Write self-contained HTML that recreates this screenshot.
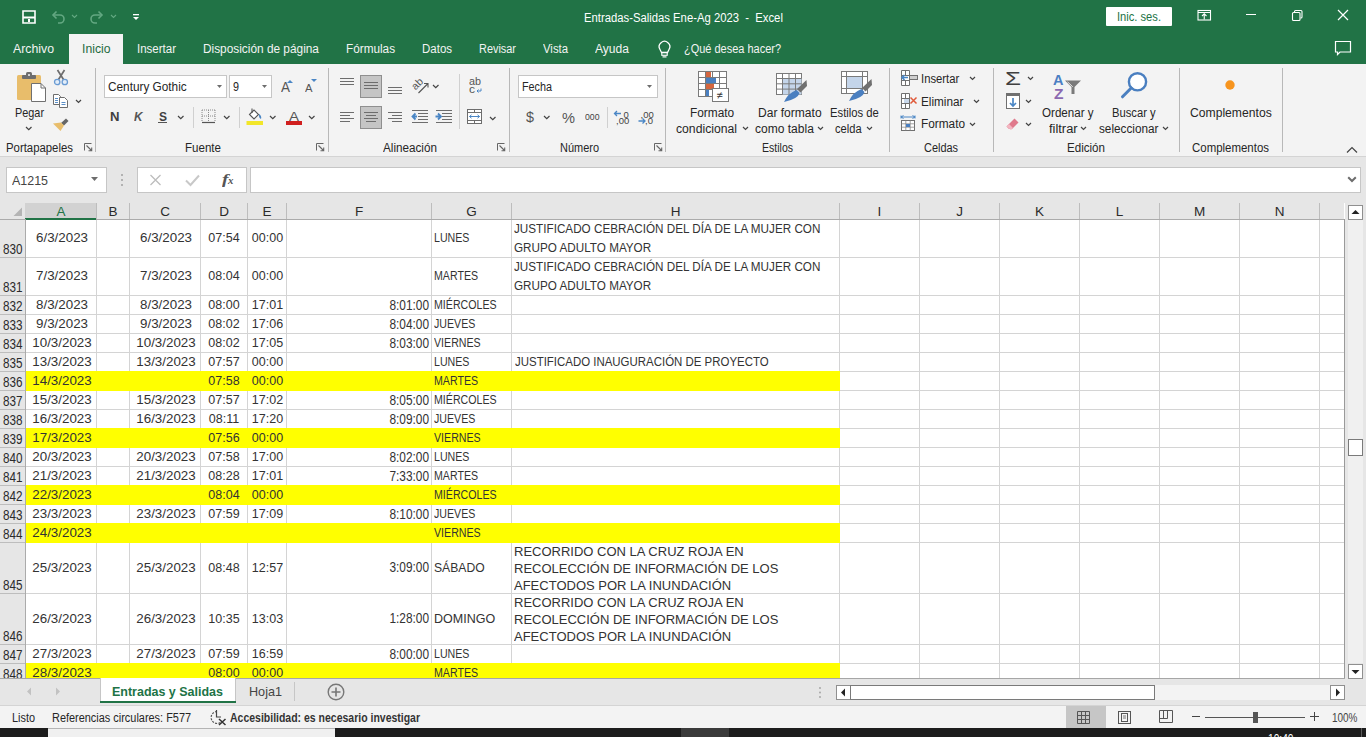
<!DOCTYPE html>
<html><head><meta charset="utf-8"><title>Excel</title>
<style>
html,body{margin:0;padding:0;width:1366px;height:737px;overflow:hidden;background:#fff;}
body{position:relative;font-family:"Liberation Sans", sans-serif;}
.a{position:absolute;}
.t{position:absolute;white-space:pre;font-family:"Liberation Sans", sans-serif;}
svg.a{overflow:visible;}
</style></head><body>
<div class="a" style="left:0px;top:0px;width:1366px;height:64px;background:#217346;"></div><div class="a" style="left:69px;top:34px;width:54px;height:30px;background:#f3f3f3;"></div><div class="t" style="top:11.92px;font-size:12.5px;line-height:12.5px;color:#ffffff;left:584px;transform:scaleX(0.903);transform-origin:left;">Entradas-Salidas Ene-Ag 2023  -  Excel</div><div class="a" style="left:1106px;top:7px;width:66px;height:19px;background:#ffffff;border-radius:1px;"></div><div class="t" style="top:10.92px;font-size:12.5px;line-height:12.5px;color:#217346;left:1117px;transform:scaleX(0.892);transform-origin:left;">Inic. ses.</div><div class="t" style="top:43.42px;font-size:12.5px;line-height:12.5px;color:#f3f3f3;left:13px;transform:scaleX(0.984);transform-origin:left;">Archivo</div><div class="t" style="top:43.42px;font-size:12.5px;line-height:12.5px;color:#f3f3f3;left:137px;transform:scaleX(0.920);transform-origin:left;">Insertar</div><div class="t" style="top:43.42px;font-size:12.5px;line-height:12.5px;color:#f3f3f3;left:203px;transform:scaleX(0.948);transform-origin:left;">Disposición de página</div><div class="t" style="top:43.42px;font-size:12.5px;line-height:12.5px;color:#f3f3f3;left:346px;transform:scaleX(0.941);transform-origin:left;">Fórmulas</div><div class="t" style="top:43.42px;font-size:12.5px;line-height:12.5px;color:#f3f3f3;left:422px;transform:scaleX(0.919);transform-origin:left;">Datos</div><div class="t" style="top:43.42px;font-size:12.5px;line-height:12.5px;color:#f3f3f3;left:479px;transform:scaleX(0.873);transform-origin:left;">Revisar</div><div class="t" style="top:43.42px;font-size:12.5px;line-height:12.5px;color:#f3f3f3;left:543px;transform:scaleX(0.907);transform-origin:left;">Vista</div><div class="t" style="top:43.42px;font-size:12.5px;line-height:12.5px;color:#f3f3f3;left:595px;transform:scaleX(0.965);transform-origin:left;">Ayuda</div><div class="t" style="top:43.42px;font-size:12.5px;line-height:12.5px;color:#f3f3f3;left:684px;transform:scaleX(0.878);transform-origin:left;">¿Qué desea hacer?</div><div class="t" style="top:43.42px;font-size:12.5px;line-height:12.5px;color:#1e6b3f;left:81.5px;transform:scaleX(0.976);transform-origin:left;">Inicio</div><div class="a" style="left:0px;top:64px;width:1366px;height:92px;background:#f3f3f3;"></div><div class="a" style="left:0px;top:156px;width:1366px;height:1px;background:#d4d4d4;"></div><div class="a" style="left:95px;top:68px;width:1px;height:84px;background:#b8b8b8;"></div><div class="a" style="left:328px;top:68px;width:1px;height:84px;background:#b8b8b8;"></div><div class="a" style="left:509px;top:68px;width:1px;height:84px;background:#b8b8b8;"></div><div class="a" style="left:665px;top:68px;width:1px;height:84px;background:#b8b8b8;"></div><div class="a" style="left:889px;top:68px;width:1px;height:84px;background:#b8b8b8;"></div><div class="a" style="left:993px;top:68px;width:1px;height:84px;background:#b8b8b8;"></div><div class="a" style="left:1179px;top:68px;width:1px;height:84px;background:#b8b8b8;"></div><div class="a" style="left:1282px;top:68px;width:1px;height:84px;background:#b8b8b8;"></div><div class="t" style="top:142.42px;font-size:12.5px;line-height:12.5px;color:#262626;left:6px;transform:scaleX(0.909);transform-origin:left;">Portapapeles</div><div class="t" style="top:142.42px;font-size:12.5px;line-height:12.5px;color:#262626;left:185px;transform:scaleX(0.925);transform-origin:left;">Fuente</div><div class="t" style="top:142.42px;font-size:12.5px;line-height:12.5px;color:#262626;left:383px;transform:scaleX(0.936);transform-origin:left;">Alineación</div><div class="t" style="top:142.42px;font-size:12.5px;line-height:12.5px;color:#262626;left:560px;transform:scaleX(0.877);transform-origin:left;">Número</div><div class="t" style="top:142.42px;font-size:12.5px;line-height:12.5px;color:#262626;left:762px;transform:scaleX(0.842);transform-origin:left;">Estilos</div><div class="t" style="top:142.42px;font-size:12.5px;line-height:12.5px;color:#262626;left:924px;transform:scaleX(0.874);transform-origin:left;">Celdas</div><div class="t" style="top:142.42px;font-size:12.5px;line-height:12.5px;color:#262626;left:1067px;transform:scaleX(0.927);transform-origin:left;">Edición</div><div class="t" style="top:142.42px;font-size:12.5px;line-height:12.5px;color:#262626;left:1192px;transform:scaleX(0.916);transform-origin:left;">Complementos</div><div class="t" style="top:105.50px;font-size:13px;line-height:13px;color:#262626;left:14.75px;transform:scaleX(0.836);transform-origin:left;">Pegar</div><div class="a" style="left:104px;top:75px;width:123px;height:23px;background:#ffffff;border:1px solid #c6c6c6;box-sizing:border-box;"></div><div class="t" style="top:81.42px;font-size:12.5px;line-height:12.5px;color:#262626;left:107.7px;transform:scaleX(0.944);transform-origin:left;">Century Gothic</div><div class="a" style="left:229px;top:75px;width:43px;height:23px;background:#ffffff;border:1px solid #c6c6c6;box-sizing:border-box;"></div><div class="t" style="top:81.42px;font-size:12.5px;line-height:12.5px;color:#262626;left:232.5px;transform:scaleX(0.863);transform-origin:left;">9</div><div class="a" style="left:518px;top:75px;width:140px;height:23px;background:#ffffff;border:1px solid #c6c6c6;box-sizing:border-box;"></div><div class="t" style="top:81.42px;font-size:12.5px;line-height:12.5px;color:#262626;left:521.5px;transform:scaleX(0.863);transform-origin:left;">Fecha</div><div class="t" style="top:107.42px;font-size:12.5px;line-height:12.5px;color:#262626;left:690.3px;transform:scaleX(0.950);transform-origin:left;">Formato</div><div class="t" style="top:123.42px;font-size:12.5px;line-height:12.5px;color:#262626;left:676.4px;transform:scaleX(0.975);transform-origin:left;">condicional</div><div class="t" style="top:107.42px;font-size:12.5px;line-height:12.5px;color:#262626;left:758px;transform:scaleX(0.964);transform-origin:left;">Dar formato</div><div class="t" style="top:123.42px;font-size:12.5px;line-height:12.5px;color:#262626;left:754.6px;transform:scaleX(0.963);transform-origin:left;">como tabla</div><div class="t" style="top:107.42px;font-size:12.5px;line-height:12.5px;color:#262626;left:830.3px;transform:scaleX(0.900);transform-origin:left;">Estilos de</div><div class="t" style="top:123.42px;font-size:12.5px;line-height:12.5px;color:#262626;left:835.4px;transform:scaleX(0.890);transform-origin:left;">celda</div><div class="t" style="top:73.42px;font-size:12.5px;line-height:12.5px;color:#262626;left:920.5px;transform:scaleX(0.901);transform-origin:left;">Insertar</div><div class="t" style="top:96.42px;font-size:12.5px;line-height:12.5px;color:#262626;left:920.5px;transform:scaleX(0.939);transform-origin:left;">Eliminar</div><div class="t" style="top:118.42px;font-size:12.5px;line-height:12.5px;color:#262626;left:920.5px;transform:scaleX(0.945);transform-origin:left;">Formato</div><div class="t" style="top:107.42px;font-size:12.5px;line-height:12.5px;color:#262626;left:1042.3px;transform:scaleX(0.928);transform-origin:left;">Ordenar y</div><div class="t" style="top:123.42px;font-size:12.5px;line-height:12.5px;color:#262626;left:1048.8px;transform:scaleX(1.029);transform-origin:left;">filtrar</div><div class="t" style="top:107.42px;font-size:12.5px;line-height:12.5px;color:#262626;left:1112px;transform:scaleX(0.898);transform-origin:left;">Buscar y</div><div class="t" style="top:123.42px;font-size:12.5px;line-height:12.5px;color:#262626;left:1099.2px;transform:scaleX(0.939);transform-origin:left;">seleccionar</div><div class="t" style="top:107.42px;font-size:12.5px;line-height:12.5px;color:#262626;left:1190px;transform:scaleX(0.972);transform-origin:left;">Complementos</div><div class="a" style="left:0px;top:157px;width:1366px;height:46px;background:#e6e6e6;"></div><div class="a" style="left:6px;top:167px;width:101px;height:26px;background:#ffffff;border:1px solid #c6c6c6;box-sizing:border-box;"></div><div class="t" style="top:174.00px;font-size:13px;line-height:13px;color:#444444;left:12.4px;transform:scaleX(0.958);transform-origin:left;">A1215</div><div class="a" style="left:137px;top:167px;width:110px;height:26px;background:#ffffff;border:1px solid #c6c6c6;box-sizing:border-box;"></div><div class="a" style="left:250px;top:167px;width:1111px;height:26px;background:#ffffff;border:1px solid #c6c6c6;box-sizing:border-box;"></div><svg class="a" style="left:22px;top:10px;" width="14" height="14" viewBox="0 0 14 14"><path d="M1 1 H13 V13 H1 Z" fill="none" stroke="#fff" stroke-width="1.6"/><rect x="1" y="6.5" width="12" height="2" fill="#fff"/><rect x="6" y="9" width="2" height="3" fill="#fff"/></svg><svg class="a" style="left:50px;top:9px;" width="16" height="15" viewBox="0 0 16 15"><path d="M3 6 H10 A4 4 0 0 1 10 14 H8" fill="none" stroke="#63a882" stroke-width="1.6"/><path d="M6.5 2.5 L3 6 L6.5 9.5" fill="none" stroke="#63a882" stroke-width="1.6"/></svg><svg class="a" style="left:71px;top:14px;" width="7" height="5" viewBox="0 0 7 5"><path d="M1 1 L3.5 3.5 L6 1" fill="none" stroke="#63a882" stroke-width="1.1"/></svg><svg class="a" style="left:89px;top:9px;" width="16" height="15" viewBox="0 0 16 15"><path d="M13 6 H6 A4 4 0 0 0 6 14 H8" fill="none" stroke="#63a882" stroke-width="1.6"/><path d="M9.5 2.5 L13 6 L9.5 9.5" fill="none" stroke="#63a882" stroke-width="1.6"/></svg><svg class="a" style="left:110px;top:14px;" width="7" height="5" viewBox="0 0 7 5"><path d="M1 1 L3.5 3.5 L6 1" fill="none" stroke="#63a882" stroke-width="1.1"/></svg><svg class="a" style="left:132px;top:13px;" width="8" height="8" viewBox="0 0 8 8"><rect x="1" y="1" width="6" height="1.3" fill="#fff"/><path d="M1 4 H7 L4 7 Z" fill="#fff"/></svg><svg class="a" style="left:1197px;top:9px;" width="15" height="12" viewBox="0 0 15 12"><rect x="1" y="1.5" width="12.5" height="9.5" fill="none" stroke="#fff" stroke-width="1.1"/><path d="M1 3.5 H13.5" stroke="#fff" stroke-width="1"/><path d="M7.25 10.5 V5 M5 7 L7.25 4.8 L9.5 7" fill="none" stroke="#fff" stroke-width="1.1"/></svg><div class="a" style="left:1246px;top:14px;width:10px;height:1px;background:#ffffff;"></div><svg class="a" style="left:1291px;top:9px;" width="13" height="13" viewBox="0 0 13 13"><rect x="1.5" y="3.5" width="7.5" height="8" rx="1" fill="none" stroke="#fff" stroke-width="1.1"/><path d="M3.5 3 V2.5 A1 1 0 0 1 4.5 1.5 H10 A1 1 0 0 1 11 2.5 V8 A1 1 0 0 1 10 9 H9.5" fill="none" stroke="#fff" stroke-width="1.1"/></svg><svg class="a" style="left:1337px;top:9px;" width="12" height="12" viewBox="0 0 12 12"><path d="M1 1 L11 11 M11 1 L1 11" stroke="#fff" stroke-width="1.2"/></svg><svg class="a" style="left:1334px;top:40px;" width="18" height="17" viewBox="0 0 18 17"><path d="M1.5 1.5 H16.5 V12 H6 L3.5 14.5 V12 H1.5 Z" fill="none" stroke="#fff" stroke-width="1.2"/></svg><svg class="a" style="left:657px;top:40px;" width="15" height="19" viewBox="0 0 15 19"><path d="M4.5 12.5 L3 9.5 A5.3 5.3 0 1 1 12 9.5 L10.5 12.5 Z" fill="none" stroke="#fff" stroke-width="1.3"/><rect x="4.8" y="12.5" width="5.4" height="2.8" fill="none" stroke="#fff" stroke-width="1.1"/><rect x="5.5" y="16.3" width="4" height="1.2" fill="#fff"/></svg><svg class="a" style="left:17px;top:72px;" width="30" height="31" viewBox="0 0 30 31"><rect x="0" y="3" width="24" height="25" rx="1.5" fill="#e8bd6b"/><rect x="5" y="3" width="14" height="4" rx="1" fill="#6d6d6d"/><rect x="9" y="0" width="6" height="5" rx="1.5" fill="#6d6d6d"/><circle cx="12" cy="3" r="1" fill="#f3f3f3"/><path d="M14.5 11.5 H24 L28.5 16 V29.5 H14.5 Z" fill="#ffffff" stroke="#707070" stroke-width="1"/><path d="M24 11.5 V16 H28.5" fill="none" stroke="#707070" stroke-width="1"/></svg><svg class="a" style="left:24.75px;top:126px;" width="7.5" height="4.75" viewBox="0 0 7.5 4.75"><path d="M1 1 L3.75 3.75 L6.5 1" fill="none" stroke="#444444" stroke-width="1.2"/></svg><svg class="a" style="left:53px;top:69px;" width="16" height="17" viewBox="0 0 16 17"><path d="M4.5 1 L10.5 10.5 M11.5 1 L5.5 10.5" stroke="#6d6d6d" stroke-width="1.7"/><circle cx="4.2" cy="13" r="2.7" fill="#e3edf8" stroke="#6a9bd3" stroke-width="1.3"/><circle cx="11.8" cy="13" r="2.7" fill="#e3edf8" stroke="#6a9bd3" stroke-width="1.3"/></svg><svg class="a" style="left:52px;top:93px;" width="18" height="16" viewBox="0 0 18 16"><path d="M1.5 1.5 H6.5 L8.5 3.5 V11.5 H1.5 Z" fill="#fff" stroke="#6d6d6d" stroke-width="1"/><path d="M3 5.5 H6 M3 7.5 H6 M3 9.5 H6" stroke="#5b8fc7" stroke-width="1"/><path d="M7.5 4.5 H12.5 L15.5 7.5 V14.5 H7.5 Z" fill="#fff" stroke="#6d6d6d" stroke-width="1"/><path d="M9.5 9.5 H13.5 M9.5 11.5 H13.5" stroke="#5b8fc7" stroke-width="1"/></svg><svg class="a" style="left:75.0px;top:99px;" width="7" height="4.5" viewBox="0 0 7 4.5"><path d="M1 1 L3.5 3.5 L6 1" fill="none" stroke="#444444" stroke-width="1.2"/></svg><svg class="a" style="left:52px;top:116px;" width="18" height="16" viewBox="0 0 18 16"><path d="M9 7 L14 2.5 L16.5 5 L12 9.5 Z" fill="#666"/><path d="M1 7.5 L9 6.5 L12 9.5 L8.5 15 Z" fill="#e8bd6b"/></svg><svg class="a" style="left:84px;top:143px;" width="9" height="9" viewBox="0 0 9 9"><path d="M0.5 7.5 V0.5 H7.5" fill="none" stroke="#666" stroke-width="1"/><path d="M2.5 2.5 L7.5 7.5 M4.5 7.7 H7.7 V4.5" fill="none" stroke="#666" stroke-width="1.1"/></svg><svg class="a" style="left:217px;top:85px;" width="5" height="3.5" viewBox="0 0 5 3.5"><path d="M0 0 H5 L2.5 3.0 Z" fill="#6d6d6d"/></svg><svg class="a" style="left:262px;top:85px;" width="5" height="3.5" viewBox="0 0 5 3.5"><path d="M0 0 H5 L2.5 3.0 Z" fill="#6d6d6d"/></svg><div class="t" style="top:80.15px;font-size:14px;line-height:14px;color:#555555;left:280.5px;transform:scaleX(0.963);transform-origin:left;">A</div><svg class="a" style="left:287px;top:80px;" width="7" height="3" viewBox="0 0 7 3"><path d="M0 3 H6 L3 0 Z" fill="#4a86c5"/></svg><div class="t" style="top:82.69px;font-size:11px;line-height:11px;color:#555555;left:305px;transform:scaleX(1.021);transform-origin:left;">A</div><svg class="a" style="left:311px;top:79px;" width="7" height="4" viewBox="0 0 7 4"><path d="M0 0 H6 L3 3 Z" fill="#4a86c5"/></svg><div class="t" style="top:110.84px;font-size:12px;line-height:12px;color:#404040;font-weight:700;left:110px;transform:scaleX(1.095);transform-origin:left;">N</div><div class="t" style="top:110.84px;font-size:12px;line-height:12px;color:#555555;font-weight:700;left:134px;transform:scaleX(0.980);transform-origin:left;font-style:italic;">K</div><div class="t" style="top:110.84px;font-size:12px;line-height:12px;color:#404040;font-weight:700;left:159px;">S</div><div class="a" style="left:158px;top:122px;width:9px;height:1.3px;background:#555555;"></div><svg class="a" style="left:176.75px;top:115px;" width="7.5" height="4.75" viewBox="0 0 7.5 4.75"><path d="M1 1 L3.75 3.75 L6.5 1" fill="none" stroke="#444444" stroke-width="1.2"/></svg><div class="a" style="left:193px;top:107px;width:1px;height:21px;background:#d0d0d0;"></div><svg class="a" style="left:201px;top:109px;" width="16" height="15" viewBox="0 0 16 15"><path d="M1 1 H14 M1 7 H14 M1 1 V13 M7.5 1 V13 M14 1 V13" stroke="#8a8a8a" stroke-width="1" stroke-dasharray="1 1" fill="none"/><path d="M1 13.5 H14" stroke="#555" stroke-width="1.2"/></svg><svg class="a" style="left:223.25px;top:115px;" width="7.5" height="4.75" viewBox="0 0 7.5 4.75"><path d="M1 1 L3.75 3.75 L6.5 1" fill="none" stroke="#444444" stroke-width="1.2"/></svg><div class="a" style="left:239px;top:107px;width:1px;height:21px;background:#d0d0d0;"></div><svg class="a" style="left:246px;top:108px;" width="19" height="18" viewBox="0 0 19 18"><path d="M3.5 6.5 L8 2 L12.5 6.5 L8 11 Z" fill="#fff" stroke="#555" stroke-width="1.1"/><path d="M6 0.5 V5" stroke="#555" stroke-width="1.1"/><path d="M13 6 Q16 8 15 11 Q12.5 10 13 6 Z" fill="#4a86c5"/><rect x="0.5" y="13" width="16.5" height="4" fill="#f2e629"/></svg><svg class="a" style="left:269.25px;top:115px;" width="7.5" height="4.75" viewBox="0 0 7.5 4.75"><path d="M1 1 L3.75 3.75 L6.5 1" fill="none" stroke="#444444" stroke-width="1.2"/></svg><div class="t" style="top:109.50px;font-size:13px;line-height:13px;color:#555555;left:289px;transform:scaleX(1.153);transform-origin:left;">A</div><div class="a" style="left:286px;top:121px;width:16px;height:4px;background:#d01f1f;"></div><svg class="a" style="left:307.75px;top:115px;" width="7.5" height="4.75" viewBox="0 0 7.5 4.75"><path d="M1 1 L3.75 3.75 L6.5 1" fill="none" stroke="#444444" stroke-width="1.2"/></svg><svg class="a" style="left:316px;top:143px;" width="9" height="9" viewBox="0 0 9 9"><path d="M0.5 7.5 V0.5 H7.5" fill="none" stroke="#666" stroke-width="1"/><path d="M2.5 2.5 L7.5 7.5 M4.5 7.7 H7.7 V4.5" fill="none" stroke="#666" stroke-width="1.1"/></svg><svg class="a" style="left:0px;top:0px;pointer-events:none;" width="1366" height="737" viewBox="0 0 1366 737"><path d="M340 78.5 H354 M340 81.5 H354 M340 84.5 H354 " stroke="#6d6d6d" stroke-width="1" fill="none"/></svg><div class="a" style="left:360px;top:75px;width:22px;height:23px;background:#c5c5c5;border:1px solid #8f8f8f;box-sizing:border-box;"></div><svg class="a" style="left:0px;top:0px;pointer-events:none;" width="1366" height="737" viewBox="0 0 1366 737"><path d="M364 82.5 H378 M364 85.5 H378 M364 88.5 H378 " stroke="#6d6d6d" stroke-width="1" fill="none"/></svg><svg class="a" style="left:0px;top:0px;pointer-events:none;" width="1366" height="737" viewBox="0 0 1366 737"><path d="M388 87.5 H402 M388 90.5 H402 M388 93.5 H402 " stroke="#6d6d6d" stroke-width="1" fill="none"/></svg><svg class="a" style="left:411px;top:77px;" width="18" height="17" viewBox="0 0 18 17"><text x="0" y="0" transform="translate(4.6 13.4) rotate(-45)" font-family="Liberation Sans" font-size="10.5" fill="#555">ab</text><path d="M7.5 16 L17 6.5 M13 6.5 H17 V10.5" fill="none" stroke="#555" stroke-width="1.1"/></svg><svg class="a" style="left:431.75px;top:84px;" width="7.5" height="4.75" viewBox="0 0 7.5 4.75"><path d="M1 1 L3.75 3.75 L6.5 1" fill="none" stroke="#444444" stroke-width="1.2"/></svg><div class="a" style="left:459px;top:74px;width:1px;height:55px;background:#d0d0d0;"></div><div class="t" style="top:76.29px;font-size:11px;line-height:11px;color:#555555;left:468.5px;transform:scaleX(0.980);transform-origin:left;">ab</div><div class="t" style="top:84.19px;font-size:11px;line-height:11px;color:#555555;left:469px;transform:scaleX(1.091);transform-origin:left;">c</div><svg class="a" style="left:476px;top:88px;" width="6" height="5" viewBox="0 0 6 5"><path d="M5 0.5 V3 H1 M2.5 1.5 L1 3 L2.5 4.5" fill="none" stroke="#4a86c5" stroke-width="1"/></svg><svg class="a" style="left:0px;top:0px;pointer-events:none;" width="1366" height="737" viewBox="0 0 1366 737"><path d="M340 112.5 H354 M340 115.5 H350 M340 118.5 H354 M340 121.5 H350 " stroke="#6d6d6d" stroke-width="1" fill="none"/></svg><div class="a" style="left:360px;top:106px;width:22px;height:23px;background:#c5c5c5;border:1px solid #8f8f8f;box-sizing:border-box;"></div><svg class="a" style="left:0px;top:0px;pointer-events:none;" width="1366" height="737" viewBox="0 0 1366 737"><path d="M364 112.5 H378 M366 115.5 H376 M364 118.5 H378 M366 121.5 H376 " stroke="#6d6d6d" stroke-width="1" fill="none"/></svg><svg class="a" style="left:0px;top:0px;pointer-events:none;" width="1366" height="737" viewBox="0 0 1366 737"><path d="M388 112.5 H402 M392 115.5 H402 M388 118.5 H402 M392 121.5 H402 " stroke="#6d6d6d" stroke-width="1" fill="none"/></svg><svg class="a" style="left:411px;top:109px;" width="18" height="15" viewBox="0 0 18 15"><path d="M1 1.5 H17 M7 4.5 H17 M7 7.5 H17 M7 10.5 H17 M1 13.5 H17" stroke="#6d6d6d" stroke-width="1" fill="none"/><path d="M1.5 7.5 H6 M4.5 4.5 L1.5 7.5 L4.5 10.5" stroke="#4a86c5" stroke-width="1.8" fill="none"/></svg><svg class="a" style="left:435px;top:109px;" width="18" height="15" viewBox="0 0 18 15"><path d="M1 1.5 H17 M7 4.5 H17 M7 7.5 H17 M7 10.5 H17 M1 13.5 H17" stroke="#6d6d6d" stroke-width="1" fill="none"/><path d="M0.5 7.5 H5 M3 4.5 L6 7.5 L3 10.5" stroke="#4a86c5" stroke-width="1.8" fill="none"/></svg><svg class="a" style="left:466px;top:108px;" width="17" height="17" viewBox="0 0 17 17"><rect x="1.5" y="1.5" width="14" height="14" fill="#fff" stroke="#6d6d6d" stroke-width="1"/><path d="M1.5 4.5 H15.5 M1.5 12.5 H15.5 M8.5 1.5 V4.5 M8.5 12.5 V15.5" stroke="#6d6d6d" stroke-width="1"/><path d="M3.5 8.5 H13.5 M5.5 6.8 L3.5 8.5 L5.5 10.2 M11.5 6.8 L13.5 8.5 L11.5 10.2" stroke="#4a86c5" stroke-width="1" fill="none"/></svg><svg class="a" style="left:489.25px;top:116px;" width="7.5" height="4.75" viewBox="0 0 7.5 4.75"><path d="M1 1 L3.75 3.75 L6.5 1" fill="none" stroke="#444444" stroke-width="1.2"/></svg><svg class="a" style="left:497px;top:143px;" width="9" height="9" viewBox="0 0 9 9"><path d="M0.5 7.5 V0.5 H7.5" fill="none" stroke="#666" stroke-width="1"/><path d="M2.5 2.5 L7.5 7.5 M4.5 7.7 H7.7 V4.5" fill="none" stroke="#666" stroke-width="1.1"/></svg><svg class="a" style="left:647px;top:85px;" width="5" height="3.5" viewBox="0 0 5 3.5"><path d="M0 0 H5 L2.5 3.0 Z" fill="#6d6d6d"/></svg><div class="t" style="top:109.30px;font-size:15px;line-height:15px;color:#555555;left:525.5px;transform:scaleX(0.959);transform-origin:left;">$</div><svg class="a" style="left:542.75px;top:115px;" width="7.5" height="4.75" viewBox="0 0 7.5 4.75"><path d="M1 1 L3.75 3.75 L6.5 1" fill="none" stroke="#444444" stroke-width="1.2"/></svg><div class="t" style="top:110.73px;font-size:14.5px;line-height:14.5px;color:#555555;left:562px;transform:scaleX(1.007);transform-origin:left;">%</div><div class="t" style="top:111.96px;font-size:9.5px;line-height:9.5px;color:#444444;left:584.5px;transform:scaleX(0.914);transform-origin:left;">000</div><div class="a" style="left:607px;top:107px;width:1px;height:21px;background:#d0d0d0;"></div><svg class="a" style="left:613px;top:109px;" width="18" height="16" viewBox="0 0 18 16"><path d="M1.5 4.5 H8 M4 2 L1.5 4.5 L4 7" stroke="#4a86c5" stroke-width="1.3" fill="none"/><text x="10.5" y="8.5" font-family="Liberation Sans" font-size="9.5" fill="#444">0</text><text x="3" y="15" font-family="Liberation Sans" font-size="9.5" fill="#444">,00</text></svg><svg class="a" style="left:638px;top:109px;" width="18" height="16" viewBox="0 0 18 16"><text x="2.5" y="8.5" font-family="Liberation Sans" font-size="9.5" fill="#444">,00</text><path d="M0.5 12 H7 M4.5 9.5 L7 12 L4.5 14.5" stroke="#4a86c5" stroke-width="1.3" fill="none"/><text x="7" y="15" font-family="Liberation Sans" font-size="9.5" fill="#444">,0</text></svg><svg class="a" style="left:654px;top:143px;" width="9" height="9" viewBox="0 0 9 9"><path d="M0.5 7.5 V0.5 H7.5" fill="none" stroke="#666" stroke-width="1"/><path d="M2.5 2.5 L7.5 7.5 M4.5 7.7 H7.7 V4.5" fill="none" stroke="#666" stroke-width="1.1"/></svg><svg class="a" style="left:698px;top:71px;" width="32" height="32" viewBox="0 0 32 32"><rect x="0.5" y="0.5" width="28" height="25" fill="#fff" stroke="#7a7a7a" stroke-width="1"/><path d="M7.5 0.5 V25.5 M14.5 0.5 V25.5 M21.5 0.5 V25.5 M0.5 6.5 H28.5 M0.5 12.5 H28.5 M0.5 18.5 H28.5" stroke="#7a7a7a" stroke-width="1"/><rect x="8" y="1" width="5" height="5" fill="#d5663f"/><rect x="8" y="7" width="10" height="5" fill="#4a7fc0"/><rect x="8" y="13" width="8" height="5" fill="#d5663f"/><rect x="8" y="19" width="3" height="6" fill="#4a7fc0"/><rect x="14.5" y="17.5" width="16" height="13" fill="#fff" stroke="#7a7a7a" stroke-width="1"/><text x="18.5" y="28" font-family="Liberation Sans" font-size="11" fill="#333">≠</text></svg><svg class="a" style="left:776px;top:73px;" width="32" height="31" viewBox="0 0 32 31"><rect x="0.5" y="0.5" width="25" height="21" fill="#fff" stroke="#7a7a7a" stroke-width="1"/><rect x="6.5" y="5.5" width="19" height="16" fill="#c4d5ea"/><path d="M6.5 0.5 V21.5 M13 0.5 V21.5 M19.5 0.5 V21.5 M0.5 5.5 H25.5 M0.5 10.8 H25.5 M0.5 16.1 H25.5" stroke="#7a7a7a" stroke-width="1"/><path d="M30.5 7 L31 13 L24.5 19.5 L21 16 Z" fill="#707070"/><path d="M20.5 17 L23.5 20 Q22 26 8 29 Q12 20 20.5 17 Z" fill="#4a7fc0"/></svg><svg class="a" style="left:841px;top:71px;" width="32" height="32" viewBox="0 0 32 32"><rect x="0.5" y="0.5" width="26" height="22" fill="#fff" stroke="#7a7a7a" stroke-width="1"/><path d="M5.5 0.5 V22.5 M21.5 0.5 V22.5 M0.5 5.5 H26.5 M0.5 17.5 H26.5" stroke="#7a7a7a" stroke-width="1"/><rect x="6" y="6" width="15" height="11" fill="#c4d5ea"/><path d="M30.5 8 L31 14 L24.5 20.5 L21 17 Z" fill="#707070"/><path d="M20.5 18 L23.5 21 Q22 27 8 30 Q12 21 20.5 18 Z" fill="#4a7fc0"/></svg><svg class="a" style="left:742.0px;top:126px;" width="7" height="4.5" viewBox="0 0 7 4.5"><path d="M1 1 L3.5 3.5 L6 1" fill="none" stroke="#444444" stroke-width="1.2"/></svg><svg class="a" style="left:817.0px;top:126px;" width="7" height="4.5" viewBox="0 0 7 4.5"><path d="M1 1 L3.5 3.5 L6 1" fill="none" stroke="#444444" stroke-width="1.2"/></svg><svg class="a" style="left:866.0px;top:126px;" width="7" height="4.5" viewBox="0 0 7 4.5"><path d="M1 1 L3.5 3.5 L6 1" fill="none" stroke="#444444" stroke-width="1.2"/></svg><svg class="a" style="left:900px;top:69px;" width="19" height="18" viewBox="0 0 19 18"><path d="M1.5 1.5 H9.5 V16.5 H1.5 Z M1.5 6.5 H9.5 M1.5 11.5 H9.5 M5.5 1.5 V6.5 M5.5 11.5 V16.5" stroke="#707070" stroke-width="1" fill="#fff"/><rect x="9.5" y="6.5" width="8" height="4" fill="#cfcfcf" stroke="#707070" stroke-width="1"/><path d="M2 8.5 H8 M4.5 6 L2 8.5 L4.5 11" stroke="#4a86c5" stroke-width="1.6" fill="none"/></svg><svg class="a" style="left:969.0px;top:76px;" width="7" height="4.5" viewBox="0 0 7 4.5"><path d="M1 1 L3.5 3.5 L6 1" fill="none" stroke="#444444" stroke-width="1.2"/></svg><svg class="a" style="left:900px;top:92px;" width="19" height="18" viewBox="0 0 19 18"><path d="M1.5 1.5 H9.5 V16.5 H1.5 Z M1.5 6.5 H9.5 M1.5 11.5 H9.5 M5.5 1.5 V6.5 M5.5 11.5 V16.5" stroke="#707070" stroke-width="1" fill="#fff"/><rect x="4" y="7" width="5" height="4" fill="#c9d9ec"/><path d="M10.5 5.5 L16.5 11.5 M16.5 5.5 L10.5 11.5" stroke="#e05a3a" stroke-width="1.5"/></svg><svg class="a" style="left:973.0px;top:99px;" width="7" height="4.5" viewBox="0 0 7 4.5"><path d="M1 1 L3.5 3.5 L6 1" fill="none" stroke="#444444" stroke-width="1.2"/></svg><svg class="a" style="left:900px;top:115px;" width="17" height="17" viewBox="0 0 17 17"><path d="M1 2 H15 M1 0.5 V3.5 M15 0.5 V3.5 M3.5 0.5 L1 2 L3.5 3.5 M12.5 0.5 L15 2 L12.5 3.5" stroke="#4a86c5" stroke-width="1" fill="none"/><rect x="1.5" y="5.5" width="13" height="10" fill="#fff" stroke="#707070" stroke-width="1"/><path d="M1.5 8.8 H14.5 M1.5 12.2 H14.5 M5.8 5.5 V15.5 M10.2 5.5 V15.5" stroke="#8a8a8a" stroke-width="0.8"/><rect x="6" y="9" width="4" height="3" fill="#4a7fc0"/></svg><svg class="a" style="left:968.5px;top:122px;" width="7" height="4.5" viewBox="0 0 7 4.5"><path d="M1 1 L3.5 3.5 L6 1" fill="none" stroke="#444444" stroke-width="1.2"/></svg><div class="t" style="top:68.92px;font-size:19px;line-height:19px;color:#404040;left:1004.5px;transform:scaleX(1.362);transform-origin:left;">Σ</div><svg class="a" style="left:1027.0px;top:76px;" width="7" height="4.5" viewBox="0 0 7 4.5"><path d="M1 1 L3.5 3.5 L6 1" fill="none" stroke="#444444" stroke-width="1.2"/></svg><svg class="a" style="left:1005px;top:92px;" width="16" height="18" viewBox="0 0 16 18"><rect x="1.5" y="1.5" width="13" height="15" fill="#fff" stroke="#707070" stroke-width="1"/><rect x="1" y="1" width="14" height="3" fill="#707070"/><path d="M8 6 V14 M5 11 L8 14 L11 11" stroke="#4a86c5" stroke-width="1.7" fill="none"/></svg><svg class="a" style="left:1025.0px;top:99px;" width="7" height="4.5" viewBox="0 0 7 4.5"><path d="M1 1 L3.5 3.5 L6 1" fill="none" stroke="#444444" stroke-width="1.2"/></svg><svg class="a" style="left:1005px;top:116px;" width="16" height="15" viewBox="0 0 16 15"><path d="M4 13 L1.5 10.5 L9.5 2.5 L13.5 6.5 L7 13 Z" fill="#e0798c"/><path d="M1.5 10.5 L4 8 L8 12 L6 14 Z" fill="#f3b6c1"/></svg><svg class="a" style="left:1025.0px;top:122px;" width="7" height="4.5" viewBox="0 0 7 4.5"><path d="M1 1 L3.5 3.5 L6 1" fill="none" stroke="#444444" stroke-width="1.2"/></svg><div class="t" style="top:71.90px;font-size:15px;line-height:15px;color:#4b7fc3;font-weight:700;left:1053px;transform:scaleX(0.968);transform-origin:left;">A</div><div class="t" style="top:86.10px;font-size:15px;line-height:15px;color:#8b68b0;font-weight:700;left:1054px;transform:scaleX(1.036);transform-origin:left;">Z</div><svg class="a" style="left:1064px;top:79px;" width="19" height="17" viewBox="0 0 19 17"><path d="M1 1.5 H17 L10.5 8 V15 H7.5 V8 Z" fill="#7a7a7a"/><path d="M3.5 2.8 L8.8 7.8" stroke="#fff" stroke-width="0.8"/></svg><svg class="a" style="left:1079.5px;top:126px;" width="7" height="4.5" viewBox="0 0 7 4.5"><path d="M1 1 L3.5 3.5 L6 1" fill="none" stroke="#444444" stroke-width="1.2"/></svg><svg class="a" style="left:1118px;top:70px;" width="32" height="31" viewBox="0 0 32 31"><circle cx="19.5" cy="11.8" r="8.6" fill="#ffffff" stroke="#4a7fc0" stroke-width="2.4"/><path d="M13.2 18 L4.5 26.8" stroke="#4a7fc0" stroke-width="3" stroke-linecap="round"/></svg><svg class="a" style="left:1161.5px;top:126px;" width="7" height="4.5" viewBox="0 0 7 4.5"><path d="M1 1 L3.5 3.5 L6 1" fill="none" stroke="#444444" stroke-width="1.2"/></svg><svg class="a" style="left:1224px;top:79px;" width="12" height="12" viewBox="0 0 12 12"><circle cx="6" cy="6" r="4.7" fill="#f7941d"/></svg><svg class="a" style="left:1346px;top:146px;" width="12" height="8" viewBox="0 0 12 8"><path d="M1 6.5 L6 1.5 L11 6.5" stroke="#444" stroke-width="1.2" fill="none"/></svg><svg class="a" style="left:91px;top:177px;" width="7" height="4.5" viewBox="0 0 7 4.5"><path d="M0 0 H7 L3.5 4.0 Z" fill="#6d6d6d"/></svg><svg class="a" style="left:120px;top:173px;" width="4" height="14" viewBox="0 0 4 14"><circle cx="2" cy="2" r="1" fill="#a0a0a0"/><circle cx="2" cy="7" r="1" fill="#a0a0a0"/><circle cx="2" cy="12" r="1" fill="#a0a0a0"/></svg><svg class="a" style="left:149px;top:174px;" width="13" height="12" viewBox="0 0 13 12"><path d="M1.5 1 L11.5 11 M11.5 1 L1.5 11" stroke="#bdbdbd" stroke-width="1.3"/></svg><svg class="a" style="left:185px;top:174px;" width="15" height="12" viewBox="0 0 15 12"><path d="M1 6.5 L5.5 11 L14 1.5" stroke="#c8c8c8" stroke-width="2" fill="none"/></svg><div class="t" style="top:173.15px;font-size:14px;line-height:14px;color:#555555;font-weight:700;left:222px;transform:scaleX(1.391);transform-origin:left;font-family:'Liberation Serif';font-style:italic;">f</div><div class="t" style="top:176.03px;font-size:10px;line-height:10px;color:#555555;font-weight:700;left:228px;transform:scaleX(1.079);transform-origin:left;font-family:'Liberation Serif';font-style:italic;">x</div><svg class="a" style="left:1347px;top:176px;" width="10" height="7" viewBox="0 0 10 7"><path d="M1.2 1.2 L5 5 L8.8 1.2" stroke="#6d6d6d" stroke-width="2" fill="none"/></svg><div class="a" style="left:0px;top:203px;width:1344px;height:16px;background:#e6e6e6;"></div><div class="a" style="left:25px;top:203px;width:71px;height:16px;background:#d2d2d2;"></div><div class="a" style="left:0px;top:219px;width:25px;height:459px;background:#e6e6e6;"></div><div class="a" style="left:26px;top:220px;width:1318px;height:458px;background:#ffffff;"></div><div class="a" style="left:26px;top:372px;width:813px;height:18px;background:#ffff00;"></div><div class="a" style="left:26px;top:429px;width:813px;height:18px;background:#ffff00;"></div><div class="a" style="left:26px;top:486px;width:813px;height:18px;background:#ffff00;"></div><div class="a" style="left:26px;top:524px;width:813px;height:18px;background:#ffff00;"></div><div class="a" style="left:26px;top:664px;width:813px;height:14px;background:#ffff00;"></div><div class="a" style="left:96px;top:220px;width:1px;height:458px;background:#d4d4d4;"></div><div class="a" style="left:129px;top:220px;width:1px;height:458px;background:#d4d4d4;"></div><div class="a" style="left:200px;top:220px;width:1px;height:458px;background:#d4d4d4;"></div><div class="a" style="left:247px;top:220px;width:1px;height:458px;background:#d4d4d4;"></div><div class="a" style="left:286px;top:220px;width:1px;height:458px;background:#d4d4d4;"></div><div class="a" style="left:431px;top:220px;width:1px;height:458px;background:#d4d4d4;"></div><div class="a" style="left:511px;top:220px;width:1px;height:458px;background:#d4d4d4;"></div><div class="a" style="left:839px;top:220px;width:1px;height:458px;background:#d4d4d4;"></div><div class="a" style="left:919px;top:220px;width:1px;height:458px;background:#d4d4d4;"></div><div class="a" style="left:999px;top:220px;width:1px;height:458px;background:#d4d4d4;"></div><div class="a" style="left:1079px;top:220px;width:1px;height:458px;background:#d4d4d4;"></div><div class="a" style="left:1159px;top:220px;width:1px;height:458px;background:#d4d4d4;"></div><div class="a" style="left:1239px;top:220px;width:1px;height:458px;background:#d4d4d4;"></div><div class="a" style="left:1319px;top:220px;width:1px;height:458px;background:#d4d4d4;"></div><div class="a" style="left:1344px;top:220px;width:1px;height:458px;background:#d4d4d4;"></div><div class="a" style="left:26px;top:257px;width:1318px;height:1px;background:#d4d4d4;"></div><div class="a" style="left:26px;top:295px;width:1318px;height:1px;background:#d4d4d4;"></div><div class="a" style="left:26px;top:314px;width:1318px;height:1px;background:#d4d4d4;"></div><div class="a" style="left:26px;top:333px;width:1318px;height:1px;background:#d4d4d4;"></div><div class="a" style="left:26px;top:352px;width:1318px;height:1px;background:#d4d4d4;"></div><div class="a" style="left:26px;top:371px;width:1318px;height:1px;background:#d4d4d4;"></div><div class="a" style="left:26px;top:390px;width:1318px;height:1px;background:#d4d4d4;"></div><div class="a" style="left:26px;top:409px;width:1318px;height:1px;background:#d4d4d4;"></div><div class="a" style="left:26px;top:428px;width:1318px;height:1px;background:#d4d4d4;"></div><div class="a" style="left:26px;top:447px;width:1318px;height:1px;background:#d4d4d4;"></div><div class="a" style="left:26px;top:466px;width:1318px;height:1px;background:#d4d4d4;"></div><div class="a" style="left:26px;top:485px;width:1318px;height:1px;background:#d4d4d4;"></div><div class="a" style="left:26px;top:504px;width:1318px;height:1px;background:#d4d4d4;"></div><div class="a" style="left:26px;top:523px;width:1318px;height:1px;background:#d4d4d4;"></div><div class="a" style="left:26px;top:542px;width:1318px;height:1px;background:#d4d4d4;"></div><div class="a" style="left:26px;top:593px;width:1318px;height:1px;background:#d4d4d4;"></div><div class="a" style="left:26px;top:644px;width:1318px;height:1px;background:#d4d4d4;"></div><div class="a" style="left:26px;top:663px;width:1318px;height:1px;background:#d4d4d4;"></div><div class="a" style="left:26px;top:371px;width:814px;height:20px;background:#ffff00;"></div><div class="a" style="left:26px;top:428px;width:814px;height:20px;background:#ffff00;"></div><div class="a" style="left:26px;top:485px;width:814px;height:20px;background:#ffff00;"></div><div class="a" style="left:26px;top:523px;width:814px;height:20px;background:#ffff00;"></div><div class="a" style="left:26px;top:663px;width:814px;height:15px;background:#ffff00;"></div><div class="a" style="left:96px;top:203px;width:1px;height:16px;background:#bdbdbd;"></div><div class="a" style="left:129px;top:203px;width:1px;height:16px;background:#bdbdbd;"></div><div class="a" style="left:200px;top:203px;width:1px;height:16px;background:#bdbdbd;"></div><div class="a" style="left:247px;top:203px;width:1px;height:16px;background:#bdbdbd;"></div><div class="a" style="left:286px;top:203px;width:1px;height:16px;background:#bdbdbd;"></div><div class="a" style="left:431px;top:203px;width:1px;height:16px;background:#bdbdbd;"></div><div class="a" style="left:511px;top:203px;width:1px;height:16px;background:#bdbdbd;"></div><div class="a" style="left:839px;top:203px;width:1px;height:16px;background:#bdbdbd;"></div><div class="a" style="left:919px;top:203px;width:1px;height:16px;background:#bdbdbd;"></div><div class="a" style="left:999px;top:203px;width:1px;height:16px;background:#bdbdbd;"></div><div class="a" style="left:1079px;top:203px;width:1px;height:16px;background:#bdbdbd;"></div><div class="a" style="left:1159px;top:203px;width:1px;height:16px;background:#bdbdbd;"></div><div class="a" style="left:1239px;top:203px;width:1px;height:16px;background:#bdbdbd;"></div><div class="a" style="left:1319px;top:203px;width:1px;height:16px;background:#bdbdbd;"></div><div class="a" style="left:0px;top:219px;width:1344px;height:1px;background:#ababab;"></div><div class="a" style="left:25px;top:218px;width:71px;height:2px;background:#217346;"></div><div class="a" style="left:25px;top:219px;width:1px;height:459px;background:#ababab;"></div><div class="t" style="top:204.57px;font-size:13.5px;line-height:13.5px;color:#217346;left:61.0px;transform:translateX(-50%);transform-origin:center;">A</div><div class="t" style="top:204.57px;font-size:13.5px;line-height:13.5px;color:#2b2b2b;left:113.0px;transform:translateX(-50%);transform-origin:center;">B</div><div class="t" style="top:204.57px;font-size:13.5px;line-height:13.5px;color:#2b2b2b;left:165.0px;transform:translateX(-50%);transform-origin:center;">C</div><div class="t" style="top:204.57px;font-size:13.5px;line-height:13.5px;color:#2b2b2b;left:224.0px;transform:translateX(-50%);transform-origin:center;">D</div><div class="t" style="top:204.57px;font-size:13.5px;line-height:13.5px;color:#2b2b2b;left:267.0px;transform:translateX(-50%);transform-origin:center;">E</div><div class="t" style="top:204.57px;font-size:13.5px;line-height:13.5px;color:#2b2b2b;left:359.0px;transform:translateX(-50%);transform-origin:center;">F</div><div class="t" style="top:204.57px;font-size:13.5px;line-height:13.5px;color:#2b2b2b;left:471.5px;transform:translateX(-50%);transform-origin:center;">G</div><div class="t" style="top:204.57px;font-size:13.5px;line-height:13.5px;color:#2b2b2b;left:675.5px;transform:translateX(-50%);transform-origin:center;">H</div><div class="t" style="top:204.57px;font-size:13.5px;line-height:13.5px;color:#2b2b2b;left:879.5px;transform:translateX(-50%);transform-origin:center;">I</div><div class="t" style="top:204.57px;font-size:13.5px;line-height:13.5px;color:#2b2b2b;left:959.5px;transform:translateX(-50%);transform-origin:center;">J</div><div class="t" style="top:204.57px;font-size:13.5px;line-height:13.5px;color:#2b2b2b;left:1039.5px;transform:translateX(-50%);transform-origin:center;">K</div><div class="t" style="top:204.57px;font-size:13.5px;line-height:13.5px;color:#2b2b2b;left:1119.5px;transform:translateX(-50%);transform-origin:center;">L</div><div class="t" style="top:204.57px;font-size:13.5px;line-height:13.5px;color:#2b2b2b;left:1199.5px;transform:translateX(-50%);transform-origin:center;">M</div><div class="t" style="top:204.57px;font-size:13.5px;line-height:13.5px;color:#2b2b2b;left:1279.5px;transform:translateX(-50%);transform-origin:center;">N</div><div class="a" style="left:0px;top:257px;width:25px;height:1px;background:#bdbdbd;"></div><div class="t" style="top:242.15px;font-size:14px;line-height:14px;color:#2b2b2b;left:3px;transform:scaleX(0.835);transform-origin:left;">830</div><div class="a" style="left:0px;top:295px;width:25px;height:1px;background:#bdbdbd;"></div><div class="t" style="top:280.15px;font-size:14px;line-height:14px;color:#2b2b2b;left:3px;transform:scaleX(0.835);transform-origin:left;">831</div><div class="a" style="left:0px;top:314px;width:25px;height:1px;background:#bdbdbd;"></div><div class="t" style="top:299.15px;font-size:14px;line-height:14px;color:#2b2b2b;left:3px;transform:scaleX(0.835);transform-origin:left;">832</div><div class="a" style="left:0px;top:333px;width:25px;height:1px;background:#bdbdbd;"></div><div class="t" style="top:318.15px;font-size:14px;line-height:14px;color:#2b2b2b;left:3px;transform:scaleX(0.835);transform-origin:left;">833</div><div class="a" style="left:0px;top:352px;width:25px;height:1px;background:#bdbdbd;"></div><div class="t" style="top:337.15px;font-size:14px;line-height:14px;color:#2b2b2b;left:3px;transform:scaleX(0.835);transform-origin:left;">834</div><div class="a" style="left:0px;top:371px;width:25px;height:1px;background:#bdbdbd;"></div><div class="t" style="top:356.15px;font-size:14px;line-height:14px;color:#2b2b2b;left:3px;transform:scaleX(0.835);transform-origin:left;">835</div><div class="a" style="left:0px;top:390px;width:25px;height:1px;background:#bdbdbd;"></div><div class="t" style="top:375.15px;font-size:14px;line-height:14px;color:#2b2b2b;left:3px;transform:scaleX(0.835);transform-origin:left;">836</div><div class="a" style="left:0px;top:409px;width:25px;height:1px;background:#bdbdbd;"></div><div class="t" style="top:394.15px;font-size:14px;line-height:14px;color:#2b2b2b;left:3px;transform:scaleX(0.835);transform-origin:left;">837</div><div class="a" style="left:0px;top:428px;width:25px;height:1px;background:#bdbdbd;"></div><div class="t" style="top:413.15px;font-size:14px;line-height:14px;color:#2b2b2b;left:3px;transform:scaleX(0.835);transform-origin:left;">838</div><div class="a" style="left:0px;top:447px;width:25px;height:1px;background:#bdbdbd;"></div><div class="t" style="top:432.15px;font-size:14px;line-height:14px;color:#2b2b2b;left:3px;transform:scaleX(0.835);transform-origin:left;">839</div><div class="a" style="left:0px;top:466px;width:25px;height:1px;background:#bdbdbd;"></div><div class="t" style="top:451.15px;font-size:14px;line-height:14px;color:#2b2b2b;left:3px;transform:scaleX(0.835);transform-origin:left;">840</div><div class="a" style="left:0px;top:485px;width:25px;height:1px;background:#bdbdbd;"></div><div class="t" style="top:470.15px;font-size:14px;line-height:14px;color:#2b2b2b;left:3px;transform:scaleX(0.835);transform-origin:left;">841</div><div class="a" style="left:0px;top:504px;width:25px;height:1px;background:#bdbdbd;"></div><div class="t" style="top:489.15px;font-size:14px;line-height:14px;color:#2b2b2b;left:3px;transform:scaleX(0.835);transform-origin:left;">842</div><div class="a" style="left:0px;top:523px;width:25px;height:1px;background:#bdbdbd;"></div><div class="t" style="top:508.15px;font-size:14px;line-height:14px;color:#2b2b2b;left:3px;transform:scaleX(0.835);transform-origin:left;">843</div><div class="a" style="left:0px;top:542px;width:25px;height:1px;background:#bdbdbd;"></div><div class="t" style="top:527.15px;font-size:14px;line-height:14px;color:#2b2b2b;left:3px;transform:scaleX(0.835);transform-origin:left;">844</div><div class="a" style="left:0px;top:593px;width:25px;height:1px;background:#bdbdbd;"></div><div class="t" style="top:578.15px;font-size:14px;line-height:14px;color:#2b2b2b;left:3px;transform:scaleX(0.835);transform-origin:left;">845</div><div class="a" style="left:0px;top:644px;width:25px;height:1px;background:#bdbdbd;"></div><div class="t" style="top:629.15px;font-size:14px;line-height:14px;color:#2b2b2b;left:3px;transform:scaleX(0.835);transform-origin:left;">846</div><div class="a" style="left:0px;top:663px;width:25px;height:1px;background:#bdbdbd;"></div><div class="t" style="top:648.15px;font-size:14px;line-height:14px;color:#2b2b2b;left:3px;transform:scaleX(0.835);transform-origin:left;">847</div><div class="t" style="top:667.15px;font-size:14px;line-height:14px;color:#2b2b2b;left:3px;transform:scaleX(0.835);transform-origin:left;">848</div><svg class="a" style="left:13px;top:207px;" width="10" height="10" viewBox="0 0 10 10"><path d="M9 0.5 L9 9 L0.5 9 Z" fill="#b4b4b4"/></svg><div class="a" style="left:1344px;top:219px;width:1px;height:459px;background:#9a9a9a;"></div><div class="a" style="left:0;top:0;width:1344px;height:678px;overflow:hidden"><div class="t" style="top:232.42px;font-size:12.5px;line-height:12.5px;color:#333333;left:62px;transform:translateX(-50%) scaleX(1.068);transform-origin:center;">6/3/2023</div><div class="t" style="top:232.42px;font-size:12.5px;line-height:12.5px;color:#333333;left:166px;transform:translateX(-50%) scaleX(1.068);transform-origin:center;">6/3/2023</div><div class="t" style="top:232.42px;font-size:12.5px;line-height:12.5px;color:#333333;left:224px;transform:translateX(-50%);transform-origin:center;">07:54</div><div class="t" style="top:232.42px;font-size:12.5px;line-height:12.5px;color:#333333;left:267.5px;transform:translateX(-50%);transform-origin:center;">00:00</div><div class="t" style="top:232.42px;font-size:12.5px;line-height:12.5px;color:#333333;left:434px;transform:scaleX(0.850);transform-origin:left;">LUNES</div><div class="t" style="top:223.42px;font-size:12.5px;line-height:12.5px;color:#333333;left:514px;transform:scaleX(0.936);transform-origin:left;">JUSTIFICADO CEBRACIÓN DEL DÍA DE LA MUJER CON</div><div class="t" style="top:242.42px;font-size:12.5px;line-height:12.5px;color:#333333;left:514px;transform:scaleX(0.936);transform-origin:left;">GRUPO ADULTO MAYOR</div><div class="t" style="top:270.42px;font-size:12.5px;line-height:12.5px;color:#333333;left:62px;transform:translateX(-50%) scaleX(1.068);transform-origin:center;">7/3/2023</div><div class="t" style="top:270.42px;font-size:12.5px;line-height:12.5px;color:#333333;left:166px;transform:translateX(-50%) scaleX(1.068);transform-origin:center;">7/3/2023</div><div class="t" style="top:270.42px;font-size:12.5px;line-height:12.5px;color:#333333;left:224px;transform:translateX(-50%);transform-origin:center;">08:04</div><div class="t" style="top:270.42px;font-size:12.5px;line-height:12.5px;color:#333333;left:267.5px;transform:translateX(-50%);transform-origin:center;">00:00</div><div class="t" style="top:270.42px;font-size:12.5px;line-height:12.5px;color:#333333;left:434px;transform:scaleX(0.850);transform-origin:left;">MARTES</div><div class="t" style="top:261.42px;font-size:12.5px;line-height:12.5px;color:#333333;left:514px;transform:scaleX(0.936);transform-origin:left;">JUSTIFICADO CEBRACIÓN DEL DÍA DE LA MUJER CON</div><div class="t" style="top:280.42px;font-size:12.5px;line-height:12.5px;color:#333333;left:514px;transform:scaleX(0.936);transform-origin:left;">GRUPO ADULTO MAYOR</div><div class="t" style="top:299.42px;font-size:12.5px;line-height:12.5px;color:#333333;left:62px;transform:translateX(-50%) scaleX(1.068);transform-origin:center;">8/3/2023</div><div class="t" style="top:299.42px;font-size:12.5px;line-height:12.5px;color:#333333;left:166px;transform:translateX(-50%) scaleX(1.068);transform-origin:center;">8/3/2023</div><div class="t" style="top:299.42px;font-size:12.5px;line-height:12.5px;color:#333333;left:224px;transform:translateX(-50%);transform-origin:center;">08:00</div><div class="t" style="top:299.42px;font-size:12.5px;line-height:12.5px;color:#333333;left:267.5px;transform:translateX(-50%);transform-origin:center;">17:01</div><div class="t" style="top:297.65px;font-size:14px;line-height:14px;color:#333333;left:429.3px;transform:translateX(-100%) scaleX(0.848);transform-origin:right;">8:01:00</div><div class="t" style="top:299.42px;font-size:12.5px;line-height:12.5px;color:#333333;left:434px;transform:scaleX(0.850);transform-origin:left;">MIÉRCOLES</div><div class="t" style="top:318.42px;font-size:12.5px;line-height:12.5px;color:#333333;left:62px;transform:translateX(-50%) scaleX(1.068);transform-origin:center;">9/3/2023</div><div class="t" style="top:318.42px;font-size:12.5px;line-height:12.5px;color:#333333;left:166px;transform:translateX(-50%) scaleX(1.068);transform-origin:center;">9/3/2023</div><div class="t" style="top:318.42px;font-size:12.5px;line-height:12.5px;color:#333333;left:224px;transform:translateX(-50%);transform-origin:center;">08:02</div><div class="t" style="top:318.42px;font-size:12.5px;line-height:12.5px;color:#333333;left:267.5px;transform:translateX(-50%);transform-origin:center;">17:06</div><div class="t" style="top:316.65px;font-size:14px;line-height:14px;color:#333333;left:429.3px;transform:translateX(-100%) scaleX(0.848);transform-origin:right;">8:04:00</div><div class="t" style="top:318.42px;font-size:12.5px;line-height:12.5px;color:#333333;left:434px;transform:scaleX(0.850);transform-origin:left;">JUEVES</div><div class="t" style="top:337.42px;font-size:12.5px;line-height:12.5px;color:#333333;left:62px;transform:translateX(-50%) scaleX(1.068);transform-origin:center;">10/3/2023</div><div class="t" style="top:337.42px;font-size:12.5px;line-height:12.5px;color:#333333;left:166px;transform:translateX(-50%) scaleX(1.068);transform-origin:center;">10/3/2023</div><div class="t" style="top:337.42px;font-size:12.5px;line-height:12.5px;color:#333333;left:224px;transform:translateX(-50%);transform-origin:center;">08:02</div><div class="t" style="top:337.42px;font-size:12.5px;line-height:12.5px;color:#333333;left:267.5px;transform:translateX(-50%);transform-origin:center;">17:05</div><div class="t" style="top:335.65px;font-size:14px;line-height:14px;color:#333333;left:429.3px;transform:translateX(-100%) scaleX(0.848);transform-origin:right;">8:03:00</div><div class="t" style="top:337.42px;font-size:12.5px;line-height:12.5px;color:#333333;left:434px;transform:scaleX(0.850);transform-origin:left;">VIERNES</div><div class="t" style="top:356.42px;font-size:12.5px;line-height:12.5px;color:#333333;left:62px;transform:translateX(-50%) scaleX(1.068);transform-origin:center;">13/3/2023</div><div class="t" style="top:356.42px;font-size:12.5px;line-height:12.5px;color:#333333;left:166px;transform:translateX(-50%) scaleX(1.068);transform-origin:center;">13/3/2023</div><div class="t" style="top:356.42px;font-size:12.5px;line-height:12.5px;color:#333333;left:224px;transform:translateX(-50%);transform-origin:center;">07:57</div><div class="t" style="top:356.42px;font-size:12.5px;line-height:12.5px;color:#333333;left:267.5px;transform:translateX(-50%);transform-origin:center;">00:00</div><div class="t" style="top:356.42px;font-size:12.5px;line-height:12.5px;color:#333333;left:434px;transform:scaleX(0.850);transform-origin:left;">LUNES</div><div class="t" style="top:356.42px;font-size:12.5px;line-height:12.5px;color:#333333;left:514.5px;transform:scaleX(0.916);transform-origin:left;">JUSTIFICADO INAUGURACIÓN DE PROYECTO</div><div class="t" style="top:375.42px;font-size:12.5px;line-height:12.5px;color:#333333;left:62px;transform:translateX(-50%) scaleX(1.068);transform-origin:center;">14/3/2023</div><div class="t" style="top:375.42px;font-size:12.5px;line-height:12.5px;color:#333333;left:224px;transform:translateX(-50%);transform-origin:center;">07:58</div><div class="t" style="top:375.42px;font-size:12.5px;line-height:12.5px;color:#333333;left:267.5px;transform:translateX(-50%);transform-origin:center;">00:00</div><div class="t" style="top:375.42px;font-size:12.5px;line-height:12.5px;color:#333333;left:434px;transform:scaleX(0.850);transform-origin:left;">MARTES</div><div class="t" style="top:394.42px;font-size:12.5px;line-height:12.5px;color:#333333;left:62px;transform:translateX(-50%) scaleX(1.068);transform-origin:center;">15/3/2023</div><div class="t" style="top:394.42px;font-size:12.5px;line-height:12.5px;color:#333333;left:166px;transform:translateX(-50%) scaleX(1.068);transform-origin:center;">15/3/2023</div><div class="t" style="top:394.42px;font-size:12.5px;line-height:12.5px;color:#333333;left:224px;transform:translateX(-50%);transform-origin:center;">07:57</div><div class="t" style="top:394.42px;font-size:12.5px;line-height:12.5px;color:#333333;left:267.5px;transform:translateX(-50%);transform-origin:center;">17:02</div><div class="t" style="top:392.65px;font-size:14px;line-height:14px;color:#333333;left:429.3px;transform:translateX(-100%) scaleX(0.848);transform-origin:right;">8:05:00</div><div class="t" style="top:394.42px;font-size:12.5px;line-height:12.5px;color:#333333;left:434px;transform:scaleX(0.850);transform-origin:left;">MIÉRCOLES</div><div class="t" style="top:413.42px;font-size:12.5px;line-height:12.5px;color:#333333;left:62px;transform:translateX(-50%) scaleX(1.068);transform-origin:center;">16/3/2023</div><div class="t" style="top:413.42px;font-size:12.5px;line-height:12.5px;color:#333333;left:166px;transform:translateX(-50%) scaleX(1.068);transform-origin:center;">16/3/2023</div><div class="t" style="top:413.42px;font-size:12.5px;line-height:12.5px;color:#333333;left:224px;transform:translateX(-50%);transform-origin:center;">08:11</div><div class="t" style="top:413.42px;font-size:12.5px;line-height:12.5px;color:#333333;left:267.5px;transform:translateX(-50%);transform-origin:center;">17:20</div><div class="t" style="top:411.65px;font-size:14px;line-height:14px;color:#333333;left:429.3px;transform:translateX(-100%) scaleX(0.848);transform-origin:right;">8:09:00</div><div class="t" style="top:413.42px;font-size:12.5px;line-height:12.5px;color:#333333;left:434px;transform:scaleX(0.850);transform-origin:left;">JUEVES</div><div class="t" style="top:432.42px;font-size:12.5px;line-height:12.5px;color:#333333;left:62px;transform:translateX(-50%) scaleX(1.068);transform-origin:center;">17/3/2023</div><div class="t" style="top:432.42px;font-size:12.5px;line-height:12.5px;color:#333333;left:224px;transform:translateX(-50%);transform-origin:center;">07:56</div><div class="t" style="top:432.42px;font-size:12.5px;line-height:12.5px;color:#333333;left:267.5px;transform:translateX(-50%);transform-origin:center;">00:00</div><div class="t" style="top:432.42px;font-size:12.5px;line-height:12.5px;color:#333333;left:434px;transform:scaleX(0.850);transform-origin:left;">VIERNES</div><div class="t" style="top:451.42px;font-size:12.5px;line-height:12.5px;color:#333333;left:62px;transform:translateX(-50%) scaleX(1.068);transform-origin:center;">20/3/2023</div><div class="t" style="top:451.42px;font-size:12.5px;line-height:12.5px;color:#333333;left:166px;transform:translateX(-50%) scaleX(1.068);transform-origin:center;">20/3/2023</div><div class="t" style="top:451.42px;font-size:12.5px;line-height:12.5px;color:#333333;left:224px;transform:translateX(-50%);transform-origin:center;">07:58</div><div class="t" style="top:451.42px;font-size:12.5px;line-height:12.5px;color:#333333;left:267.5px;transform:translateX(-50%);transform-origin:center;">17:00</div><div class="t" style="top:449.65px;font-size:14px;line-height:14px;color:#333333;left:429.3px;transform:translateX(-100%) scaleX(0.848);transform-origin:right;">8:02:00</div><div class="t" style="top:451.42px;font-size:12.5px;line-height:12.5px;color:#333333;left:434px;transform:scaleX(0.850);transform-origin:left;">LUNES</div><div class="t" style="top:470.42px;font-size:12.5px;line-height:12.5px;color:#333333;left:62px;transform:translateX(-50%) scaleX(1.068);transform-origin:center;">21/3/2023</div><div class="t" style="top:470.42px;font-size:12.5px;line-height:12.5px;color:#333333;left:166px;transform:translateX(-50%) scaleX(1.068);transform-origin:center;">21/3/2023</div><div class="t" style="top:470.42px;font-size:12.5px;line-height:12.5px;color:#333333;left:224px;transform:translateX(-50%);transform-origin:center;">08:28</div><div class="t" style="top:470.42px;font-size:12.5px;line-height:12.5px;color:#333333;left:267.5px;transform:translateX(-50%);transform-origin:center;">17:01</div><div class="t" style="top:468.65px;font-size:14px;line-height:14px;color:#333333;left:429.3px;transform:translateX(-100%) scaleX(0.848);transform-origin:right;">7:33:00</div><div class="t" style="top:470.42px;font-size:12.5px;line-height:12.5px;color:#333333;left:434px;transform:scaleX(0.850);transform-origin:left;">MARTES</div><div class="t" style="top:489.42px;font-size:12.5px;line-height:12.5px;color:#333333;left:62px;transform:translateX(-50%) scaleX(1.068);transform-origin:center;">22/3/2023</div><div class="t" style="top:489.42px;font-size:12.5px;line-height:12.5px;color:#333333;left:224px;transform:translateX(-50%);transform-origin:center;">08:04</div><div class="t" style="top:489.42px;font-size:12.5px;line-height:12.5px;color:#333333;left:267.5px;transform:translateX(-50%);transform-origin:center;">00:00</div><div class="t" style="top:489.42px;font-size:12.5px;line-height:12.5px;color:#333333;left:434px;transform:scaleX(0.850);transform-origin:left;">MIÉRCOLES</div><div class="t" style="top:508.42px;font-size:12.5px;line-height:12.5px;color:#333333;left:62px;transform:translateX(-50%) scaleX(1.068);transform-origin:center;">23/3/2023</div><div class="t" style="top:508.42px;font-size:12.5px;line-height:12.5px;color:#333333;left:166px;transform:translateX(-50%) scaleX(1.068);transform-origin:center;">23/3/2023</div><div class="t" style="top:508.42px;font-size:12.5px;line-height:12.5px;color:#333333;left:224px;transform:translateX(-50%);transform-origin:center;">07:59</div><div class="t" style="top:508.42px;font-size:12.5px;line-height:12.5px;color:#333333;left:267.5px;transform:translateX(-50%);transform-origin:center;">17:09</div><div class="t" style="top:506.65px;font-size:14px;line-height:14px;color:#333333;left:429.3px;transform:translateX(-100%) scaleX(0.848);transform-origin:right;">8:10:00</div><div class="t" style="top:508.42px;font-size:12.5px;line-height:12.5px;color:#333333;left:434px;transform:scaleX(0.850);transform-origin:left;">JUEVES</div><div class="t" style="top:527.42px;font-size:12.5px;line-height:12.5px;color:#333333;left:62px;transform:translateX(-50%) scaleX(1.068);transform-origin:center;">24/3/2023</div><div class="t" style="top:527.42px;font-size:12.5px;line-height:12.5px;color:#333333;left:434px;transform:scaleX(0.850);transform-origin:left;">VIERNES</div><div class="t" style="top:561.92px;font-size:12.5px;line-height:12.5px;color:#333333;left:62px;transform:translateX(-50%) scaleX(1.068);transform-origin:center;">25/3/2023</div><div class="t" style="top:561.92px;font-size:12.5px;line-height:12.5px;color:#333333;left:166px;transform:translateX(-50%) scaleX(1.068);transform-origin:center;">25/3/2023</div><div class="t" style="top:561.92px;font-size:12.5px;line-height:12.5px;color:#333333;left:224px;transform:translateX(-50%);transform-origin:center;">08:48</div><div class="t" style="top:561.92px;font-size:12.5px;line-height:12.5px;color:#333333;left:267.5px;transform:translateX(-50%);transform-origin:center;">12:57</div><div class="t" style="top:560.15px;font-size:14px;line-height:14px;color:#333333;left:429.3px;transform:translateX(-100%) scaleX(0.848);transform-origin:right;">3:09:00</div><div class="t" style="top:561.07px;font-size:13.5px;line-height:13.5px;color:#333333;left:434px;transform:scaleX(0.899);transform-origin:left;">SÁBADO</div><div class="t" style="top:544.57px;font-size:13.5px;line-height:13.5px;color:#333333;left:514px;transform:scaleX(0.963);transform-origin:left;">RECORRIDO CON LA CRUZ ROJA EN</div><div class="t" style="top:561.57px;font-size:13.5px;line-height:13.5px;color:#333333;left:514px;transform:scaleX(0.963);transform-origin:left;">RECOLECCIÓN DE INFORMACIÓN DE LOS</div><div class="t" style="top:578.57px;font-size:13.5px;line-height:13.5px;color:#333333;left:514px;transform:scaleX(0.963);transform-origin:left;">AFECTODOS POR LA INUNDACIÓN</div><div class="t" style="top:612.92px;font-size:12.5px;line-height:12.5px;color:#333333;left:62px;transform:translateX(-50%) scaleX(1.068);transform-origin:center;">26/3/2023</div><div class="t" style="top:612.92px;font-size:12.5px;line-height:12.5px;color:#333333;left:166px;transform:translateX(-50%) scaleX(1.068);transform-origin:center;">26/3/2023</div><div class="t" style="top:612.92px;font-size:12.5px;line-height:12.5px;color:#333333;left:224px;transform:translateX(-50%);transform-origin:center;">10:35</div><div class="t" style="top:612.92px;font-size:12.5px;line-height:12.5px;color:#333333;left:267.5px;transform:translateX(-50%);transform-origin:center;">13:03</div><div class="t" style="top:611.15px;font-size:14px;line-height:14px;color:#333333;left:429.3px;transform:translateX(-100%) scaleX(0.848);transform-origin:right;">1:28:00</div><div class="t" style="top:612.07px;font-size:13.5px;line-height:13.5px;color:#333333;left:434px;transform:scaleX(0.927);transform-origin:left;">DOMINGO</div><div class="t" style="top:595.57px;font-size:13.5px;line-height:13.5px;color:#333333;left:514px;transform:scaleX(0.963);transform-origin:left;">RECORRIDO CON LA CRUZ ROJA EN</div><div class="t" style="top:612.57px;font-size:13.5px;line-height:13.5px;color:#333333;left:514px;transform:scaleX(0.963);transform-origin:left;">RECOLECCIÓN DE INFORMACIÓN DE LOS</div><div class="t" style="top:629.57px;font-size:13.5px;line-height:13.5px;color:#333333;left:514px;transform:scaleX(0.963);transform-origin:left;">AFECTODOS POR LA INUNDACIÓN</div><div class="t" style="top:648.42px;font-size:12.5px;line-height:12.5px;color:#333333;left:62px;transform:translateX(-50%) scaleX(1.068);transform-origin:center;">27/3/2023</div><div class="t" style="top:648.42px;font-size:12.5px;line-height:12.5px;color:#333333;left:166px;transform:translateX(-50%) scaleX(1.068);transform-origin:center;">27/3/2023</div><div class="t" style="top:648.42px;font-size:12.5px;line-height:12.5px;color:#333333;left:224px;transform:translateX(-50%);transform-origin:center;">07:59</div><div class="t" style="top:648.42px;font-size:12.5px;line-height:12.5px;color:#333333;left:267.5px;transform:translateX(-50%);transform-origin:center;">16:59</div><div class="t" style="top:646.65px;font-size:14px;line-height:14px;color:#333333;left:429.3px;transform:translateX(-100%) scaleX(0.848);transform-origin:right;">8:00:00</div><div class="t" style="top:648.42px;font-size:12.5px;line-height:12.5px;color:#333333;left:434px;transform:scaleX(0.850);transform-origin:left;">LUNES</div><div class="t" style="top:667.42px;font-size:12.5px;line-height:12.5px;color:#333333;left:62px;transform:translateX(-50%) scaleX(1.068);transform-origin:center;">28/3/2023</div><div class="t" style="top:667.42px;font-size:12.5px;line-height:12.5px;color:#333333;left:224px;transform:translateX(-50%);transform-origin:center;">08:00</div><div class="t" style="top:667.42px;font-size:12.5px;line-height:12.5px;color:#333333;left:267.5px;transform:translateX(-50%);transform-origin:center;">00:00</div><div class="t" style="top:667.42px;font-size:12.5px;line-height:12.5px;color:#333333;left:434px;transform:scaleX(0.850);transform-origin:left;">MARTES</div></div><div class="a" style="left:1345px;top:203px;width:21px;height:475px;background:#e6e6e6;"></div><div class="a" style="left:1348px;top:220px;width:15px;height:443px;background:#f0f0f0;"></div><div class="a" style="left:1348px;top:205px;width:15px;height:15px;background:#ffffff;border:1px solid #8f8f8f;box-sizing:border-box;"></div><svg class="a" style="left:1351px;top:209px;" width="9" height="6" viewBox="0 0 9 6"><path d="M0.5 5 H8.5 L4.5 1 Z" fill="#222"/></svg><div class="a" style="left:1348px;top:439px;width:15px;height:17px;background:#ffffff;border:1.5px solid #7a7a7a;box-sizing:border-box;"></div><div class="a" style="left:0px;top:678px;width:1366px;height:28px;background:#e6e6e6;"></div><div class="a" style="left:0px;top:678px;width:1345px;height:1px;background:#a6a6a6;"></div><div class="a" style="left:1348px;top:664px;width:15px;height:15px;background:#ffffff;border:1px solid #8f8f8f;box-sizing:border-box;"></div><svg class="a" style="left:1351px;top:669px;" width="9" height="6" viewBox="0 0 9 6"><path d="M0.5 1 H8.5 L4.5 5 Z" fill="#222"/></svg><div class="a" style="left:100px;top:678px;width:136px;height:25px;background:#ffffff;"></div><div class="a" style="left:100px;top:678px;width:1px;height:24px;background:#c6c6c6;"></div><div class="a" style="left:235px;top:678px;width:1px;height:24px;background:#c6c6c6;"></div><div class="a" style="left:100px;top:701px;width:136px;height:2px;background:#217346;"></div><div class="t" style="top:684.50px;font-size:13px;line-height:13px;color:#217346;font-weight:700;left:112px;transform:scaleX(0.960);transform-origin:left;">Entradas y Salidas</div><div class="t" style="top:684.50px;font-size:13px;line-height:13px;color:#444444;left:248.5px;transform:scaleX(0.971);transform-origin:left;">Hoja1</div><div class="a" style="left:294px;top:682px;width:1px;height:19px;background:#c6c6c6;"></div><svg class="a" style="left:26px;top:687px;" width="6" height="9" viewBox="0 0 6 9"><path d="M5 0.5 V8.5 L1 4.5 Z" fill="#c2c2c2"/></svg><svg class="a" style="left:55px;top:687px;" width="6" height="9" viewBox="0 0 6 9"><path d="M1 0.5 V8.5 L5 4.5 Z" fill="#c2c2c2"/></svg><svg class="a" style="left:327px;top:683px;" width="18" height="18" viewBox="0 0 18 18"><circle cx="9" cy="9" r="7.8" fill="none" stroke="#777" stroke-width="1.4"/><path d="M9 4.5 V13.5 M4.5 9 H13.5" stroke="#777" stroke-width="1.6"/></svg><svg class="a" style="left:818px;top:686px;" width="4" height="14" viewBox="0 0 4 14"><circle cx="2" cy="2" r="0.9" fill="#a0a0a0"/><circle cx="2" cy="6.5" r="0.9" fill="#a0a0a0"/><circle cx="2" cy="11" r="0.9" fill="#a0a0a0"/></svg><div class="a" style="left:836px;top:685px;width:509px;height:15px;background:#f3f3f3;"></div><div class="a" style="left:836px;top:685px;width:15px;height:15px;background:#ffffff;border:1px solid #8f8f8f;box-sizing:border-box;"></div><svg class="a" style="left:840px;top:688px;" width="6" height="9" viewBox="0 0 6 9"><path d="M5 0.5 V8.5 L1 4.5 Z" fill="#222"/></svg><div class="a" style="left:850px;top:685px;width:305px;height:15px;background:#ffffff;border:1.5px solid #7a7a7a;box-sizing:border-box;"></div><div class="a" style="left:1330px;top:685px;width:15px;height:15px;background:#ffffff;border:1px solid #8f8f8f;box-sizing:border-box;"></div><svg class="a" style="left:1335px;top:688px;" width="6" height="9" viewBox="0 0 6 9"><path d="M1 0.5 V8.5 L5 4.5 Z" fill="#222"/></svg><div class="a" style="left:0px;top:706px;width:1366px;height:22px;background:#f3f3f3;"></div><div class="a" style="left:0px;top:705px;width:1366px;height:1px;background:#d4d4d4;"></div><div class="t" style="top:712.42px;font-size:12.5px;line-height:12.5px;color:#262626;left:11.5px;transform:scaleX(0.871);transform-origin:left;">Listo</div><div class="t" style="top:712.42px;font-size:12.5px;line-height:12.5px;color:#262626;left:51.5px;transform:scaleX(0.874);transform-origin:left;">Referencias circulares: F577</div><svg class="a" style="left:209px;top:709px;" width="18" height="17" viewBox="0 0 18 17"><path d="M8 2.5 A6 6 0 1 0 13 12" fill="none" stroke="#555" stroke-width="1.2" stroke-dasharray="2 1.3"/><path d="M7.5 1 V8 H12" fill="none" stroke="#444" stroke-width="1.2"/><path d="M10 10 L16.5 16 M16.5 10 L10 16" stroke="#333" stroke-width="1.5"/></svg><div class="t" style="top:711.92px;font-size:12.5px;line-height:12.5px;color:#333333;font-weight:700;left:229.5px;transform:scaleX(0.839);transform-origin:left;">Accesibilidad: es necesario investigar</div><div class="a" style="left:1066px;top:706px;width:40px;height:22px;background:#c6c6c6;"></div><svg class="a" style="left:1076px;top:710px;" width="16" height="16" viewBox="0 0 16 16"><path d="M1.5 1.5 H13.5 V13.5 H1.5 Z M1.5 5.5 H13.5 M1.5 9.5 H13.5 M5.5 1.5 V13.5 M9.5 1.5 V13.5" fill="none" stroke="#555" stroke-width="1"/></svg><svg class="a" style="left:1117px;top:710px;" width="16" height="16" viewBox="0 0 16 16"><rect x="1.5" y="1.5" width="12" height="12" fill="none" stroke="#555" stroke-width="1"/><rect x="4.5" y="3.5" width="6" height="8" fill="none" stroke="#555" stroke-width="1"/><path d="M6 6 H9 M6 8 H9" stroke="#555" stroke-width="0.8"/></svg><svg class="a" style="left:1158px;top:709px;" width="17" height="16" viewBox="0 0 17 16"><path d="M1.5 1.5 H14.5 V13.5 H1.5 Z" fill="none" stroke="#555" stroke-width="1"/><path d="M1.5 9.5 H9.5 V1.5 M5.5 1.5 V9.5" fill="none" stroke="#555" stroke-width="1"/></svg><div class="a" style="left:1192px;top:716px;width:8px;height:1px;background:#444444;"></div><div class="a" style="left:1205px;top:717px;width:100px;height:1px;background:#555555;"></div><div class="a" style="left:1253px;top:712px;width:5px;height:11px;background:#555555;"></div><div class="a" style="left:1310px;top:716px;width:9px;height:1px;background:#444444;"></div><div class="a" style="left:1314px;top:712px;width:1px;height:9px;background:#444444;"></div><div class="t" style="top:712.42px;font-size:12.5px;line-height:12.5px;color:#444444;left:1331.5px;transform:scaleX(0.797);transform-origin:left;">100%</div><div class="a" style="left:0px;top:728px;width:1366px;height:9px;background:#1c1c1c;"></div><div class="a" style="left:48px;top:728px;width:287px;height:9px;background:#f0f0f0;"></div><div class="a" style="left:48px;top:728px;width:287px;height:1px;background:#b4b4b4;"></div><div class="a" style="left:681px;top:728px;width:48px;height:9px;background:#3a3a3a;"></div><div class="t" style="top:733.42px;font-size:12.5px;line-height:12.5px;color:#ffffff;left:1268px;transform:scaleX(0.815);transform-origin:left;">10:40</div><div class="a" style="left:1361px;top:728px;width:1px;height:9px;background:#5a5a5a;"></div>
</body></html>
